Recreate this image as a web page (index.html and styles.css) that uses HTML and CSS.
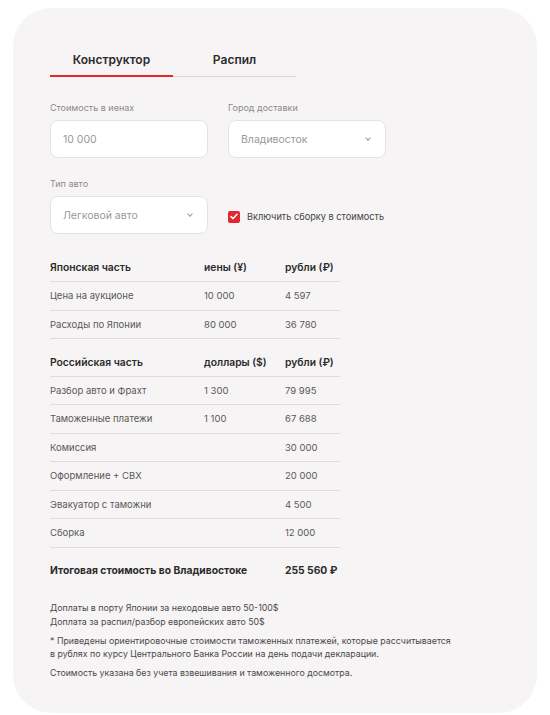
FILE: index.html
```html
<!DOCTYPE html>
<html lang="ru">
<head>
    <meta charset="UTF-8">
    <meta name="viewport" content="width=device-width, initial-scale=1.0">
    <title>Калькулятор стоимости</title>
    <link rel="stylesheet" href="styles.css">
</head>
<body>
    <div class="card">
        <div class="tabs">
            <div class="tab active">Конструктор</div>
            <div class="tab">Распил</div>
        </div>

        <div class="fields">
            <div class="field">
                <label class="field-label">Стоимость в иенах</label>
                <div class="input">10 000</div>
            </div>
            <div class="field">
                <label class="field-label">Город доставки</label>
                <div class="input select">Владивосток <span class="chevron"></span></div>
            </div>
            <div class="field">
                <label class="field-label">Тип авто</label>
                <div class="input select">Легковой авто <span class="chevron"></span></div>
            </div>
            <div class="field check-field">
                <label class="check">
                    <span class="box">
                        <svg width="8" height="7" viewBox="0 0 8 7"><path d="M1 3.6 L3.1 5.6 L7 1.2" fill="none" stroke="#fff" stroke-width="1.5" stroke-linecap="round" stroke-linejoin="round"/></svg>
                    </span>
                    Включить сборку в стоимость
                </label>
            </div>
        </div>

        <table class="calc">
            <colgroup>
                <col class="c-name">
                <col class="c-cur">
                <col class="c-rub">
            </colgroup>
            <tr class="head">
                <td>Японская часть</td><td>иены (¥)</td><td>рубли (₽)</td>
            </tr>
            <tr><td>Цена на аукционе</td><td>10 000</td><td>4 597</td></tr>
            <tr><td>Расходы по Японии</td><td>80 000</td><td>36 780</td></tr>
            <tr class="spacer"><td colspan="3"></td></tr>
            <tr class="head">
                <td>Российская часть</td><td>доллары ($)</td><td>рубли (₽)</td>
            </tr>
            <tr><td>Разбор авто и Фрахт</td><td>1 300</td><td>79 995</td></tr>
            <tr><td>Таможенные платежи</td><td>1 100</td><td>67 688</td></tr>
            <tr><td>Комиссия</td><td></td><td>30 000</td></tr>
            <tr><td>Оформление + СВХ</td><td></td><td>20 000</td></tr>
            <tr><td>Эвакуатор с таможни</td><td></td><td>4 500</td></tr>
            <tr><td>Сборка</td><td></td><td>12 000</td></tr>
            <tr class="total">
                <td colspan="2">Итоговая стоимость во Владивостоке</td><td>255 560 ₽</td>
            </tr>
        </table>

        <div class="notes">
            <p>Доплаты в порту Японии за неходовые авто 50-100$<br>Доплата за распил/разбор европейских авто 50$</p>
            <p>* Приведены ориентировочные стоимости таможенных платежей, которые рассчитывается<br>в рублях по курсу Центрального Банка России на день подачи декларации.</p>
            <p>Стоимость указана без учета взвешивания и таможенного досмотра.</p>
        </div>
    </div>
</body>
</html>
```

FILE: styles.css
```css
* {
    margin: 0;
    padding: 0;
    box-sizing: border-box;
}

body {
    font-family: 'Inter', 'Noto Sans', sans-serif;
    background: #fff;
    color: #2b2b2b;
}

.card {
    margin: 8px 13px 2px;
    height: 705px;
    background: #f6f4f4;
    border-radius: 38px;
    padding: 34px 37px 0;
}

.tabs {
    display: flex;
    width: 246px;
    border-bottom: 1px solid #d9d6d6;
}

.tab {
    width: 124px;
    text-align: center;
    font-size: 12px;
    font-weight: 600;
    line-height: 14px;
    padding: 11px 0 8px;
    color: #2b2b2b;
    margin-bottom: -1px;
    border-bottom: 2px solid transparent;
}

.tab.active {
    border-bottom-color: #e3262f;
}

.fields {
    display: grid;
    grid-template-columns: 158px 200px;
    column-gap: 20px;
    row-gap: 20px;
    margin-top: 25px;
}

.field-label {
    display: block;
    font-size: 9px;
    line-height: 12px;
    color: #8c8a8a;
    margin-bottom: 6px;
}

.input {
    width: 158px;
    height: 38px;
    background: #fff;
    border: 1px solid #e6e3e3;
    border-radius: 8px;
    padding: 0 12px;
    display: flex;
    align-items: center;
    justify-content: space-between;
    font-size: 10.5px;
    color: #9a9898;
}

.chevron {
    width: 4px;
    height: 4px;
    border-right: 1px solid #999;
    border-bottom: 1px solid #999;
    transform: rotate(45deg);
    margin: -2px 3px 0 0;
}

.check-field {
    display: flex;
    align-items: flex-end;
}

.check {
    height: 38px;
    padding-top: 3px;
    display: flex;
    align-items: center;
    gap: 7px;
    font-size: 9.2px;
    color: #444;
    white-space: nowrap;
}

.box {
    width: 12px;
    height: 12px;
    background: #e3262f;
    border-radius: 2px;
    display: flex;
    align-items: center;
    justify-content: center;
}

.calc {
    width: 290px;
    table-layout: fixed;
    border-collapse: collapse;
    margin-top: 19px;
}

.c-name { width: 154px; }
.c-cur { width: 81px; }
.c-rub { width: 55px; }

.calc td {
    height: 28.5px;
    padding: 0;
    font-size: 9.5px;
    color: #5a5858;
    border-bottom: 1px solid #dedbdb;
    vertical-align: middle;
    white-space: nowrap;
}

.calc .head td {
    font-size: 10.3px;
    font-weight: 600;
    color: #2b2b2b;
}

.calc .spacer td {
    height: 9px;
    border: none;
}

.calc .total td {
    height: 46px;
    border: none;
    font-size: 10.3px;
    font-weight: 700;
    color: #2b2b2b;
}

.notes {
    margin-top: 8px;
    max-width: 440px;
    font-size: 8.8px;
    line-height: 13.5px;
    color: #4a4a4a;
}

.notes p {
    margin-bottom: 5.5px;
}
```
